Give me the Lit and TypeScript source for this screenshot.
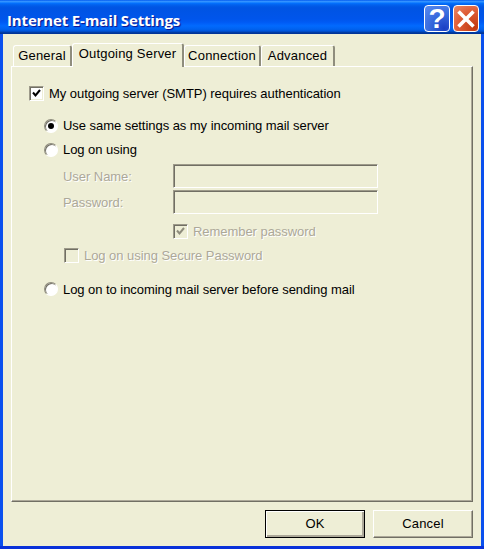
import { LitElement, html, css } from "lit";
import { customElement } from "lit/decorators.js";

@customElement("app-root")
export class AppRoot extends LitElement {
  static styles = css`
    :host { display: block; width: 484px; height: 549px; font-family: "Liberation Sans", Arial, sans-serif; font-size: 13px; letter-spacing: -0.05px; color: #000; }
    .window { width: 484px; height: 549px; box-sizing: border-box; display: flex; flex-direction: column; background: #0a50ee; border-bottom: 3px solid #0831d9; overflow: hidden; }
    .title { height: 34px; flex: none; box-sizing: border-box; display: flex; align-items: center; padding: 3px 5px 0 7px;
      background: linear-gradient(180deg, #0058ee 0%, #3593ff 4%, #288eff 6%, #127dff 8%, #036ffc 10%, #0262ee 14%, #0057e5 20%, #0054e3 24%, #0055eb 56%, #005bf5 66%, #026afe 76%, #0062ef 86%, #0052d6 92%, #0040ab 94%, #003092 100%); }
    .title-text { flex: 1; color: #fff; font-family: "Open Sans", sans-serif; font-weight: 700; font-size: 15px; letter-spacing: -0.15px; padding-top: 2px; text-shadow: 1px 1px 1px #0f1089; white-space: nowrap; }
    .tb { width: 26px; height: 27px; box-sizing: border-box; border: 1px solid #fff; border-radius: 4px; display: flex; align-items: center; justify-content: center; }
    .help { background: radial-gradient(circle at 80% 90%, #1a3fc4 0%, #3c6fe0 55%, #5a8cf0 100%); margin-right: 3px; color: #fff; font-family: "Liberation Sans", sans-serif; font-weight: 700; font-size: 28px; line-height: 25px; }
    .close { background: radial-gradient(circle at 85% 85%, #c23a10 0%, #e0603a 60%, #e88a6a 100%); }
    .body { flex: 1; margin: 0 3px; background: #eeeed6; display: flex; flex-direction: column; padding: 9px 8px 8px; min-height: 0; }
    .tabs { display: flex; align-items: flex-end; padding-left: 2px; height: 23px; flex: none; letter-spacing: 0.2px; }
    .tab { height: 21px; box-sizing: border-box; border: 1px solid #fff; border-bottom: 0; border-right: 2px solid #8f8d7d; border-radius: 3px 3px 0 0; display: flex; align-items: center; justify-content: center; white-space: nowrap; padding-bottom: 2px; }
    .tab.sel { height: 24px; margin-bottom: -1px; position: relative; z-index: 1; background: #eeeed6; padding-bottom: 5px; }
    .panel { flex: 1; box-sizing: border-box; border: 1px solid; border-color: #fff #716f64 #716f64 #fff; box-shadow: inset -1px -1px 0 #aca899; padding: 18px 0 0 17px; }
    .row { display: flex; align-items: center; height: 16px; white-space: nowrap; }
    .cb { width: 15px; height: 15px; box-sizing: border-box; flex: none; display: flex; align-items: center; justify-content: center;
      border: 1px solid; border-color: #9d9a8a #fff #fff #9d9a8a; background: #fff; box-shadow: inset 1px 1px 0 #716f64, inset -1px -1px 0 #eeeed6; }
    .cb svg { display: block; }
    .cb.off { background: #eeeed6; }
    .radio { width: 14px; height: 14px; box-sizing: border-box; flex: none; border-radius: 50%; background: #fff; border: 1px solid; border-color: #8f8d7d #fff #fff #8f8d7d; box-shadow: inset 1px 1px 0 #716f64; display: flex; align-items: center; justify-content: center; }
    .dot { width: 6px; height: 6px; border-radius: 50%; background: #000; }
    .lbl-cb { margin-left: 5px; }
    .lbl-r { margin-left: 5px; }
    .up { padding-bottom: 2px; }
    .dis { color: #aca899; text-shadow: 1px 1px 0 #fff; }
    .group { margin-left: 15px; }
    .m17 { margin-top: 17px; }
    .m8 { margin-top: 8px; }
    .m18 { margin-top: 18px; }
    .form { margin: 6px 0 0 19px; display: grid; grid-template-columns: 110px 205px; grid-auto-rows: 24px; row-gap: 2px; align-items: center; }
    .input { height: 24px; box-sizing: border-box; border: 1px solid; border-color: #9d9a8a #fff #fff #9d9a8a; box-shadow: inset 1px 1px 0 #716f64; }
    .rem { margin: 9px 0 0 129px; }
    .sec { margin: 8px 0 0 20px; }
    .footer { flex: none; display: flex; justify-content: flex-end; gap: 8px; padding-top: 8px; letter-spacing: 0.2px; }
    .btn { width: 100px; height: 28px; box-sizing: border-box; border: 1px solid; border-color: #fff #716f64 #716f64 #fff; box-shadow: inset -1px -1px 0 #aca899; display: flex; align-items: center; justify-content: center; padding-bottom: 2px; }
    .btn.def { border: 1px solid #000; box-shadow: inset 1px 1px 0 #fff, inset -2px -2px 0 #aca899; }
  `;

  private check(color: string) {
    return html`<svg width="9" height="9" viewBox="0 0 9 9"><path d="M1 3.5 L3.5 6.5 L8 1" fill="none" stroke=${color} stroke-width="2"/></svg>`;
  }

  render() {
    return html`<div class="window">
      <div class="title">
        <div class="title-text">Internet E-mail Settings</div>
        <div class="tb help">?</div>
        <div class="tb close"><svg width="20" height="20" viewBox="0 0 20 20"><path d="M2.5 2.5 L17.5 17.5 M17.5 2.5 L2.5 17.5" stroke="#fff" stroke-width="3.6" fill="none"/></svg></div>
      </div>
      <div class="body">
        <div class="tabs">
          <div class="tab" style="width:59px">General</div>
          <div class="tab sel" style="width:112px">Outgoing Server</div>
          <div class="tab" style="width:77px">Connection</div>
          <div class="tab" style="width:74px">Advanced</div>
        </div>
        <div class="panel">
          <div class="row"><span class="cb">${this.check("#000")}</span><span class="lbl-cb">My outgoing server (SMTP) requires authentication</span></div>
          <div class="group">
            <div class="row m17"><span class="radio"><span class="dot"></span></span><span class="lbl-r up">Use same settings as my incoming mail server</span></div>
            <div class="row m8"><span class="radio"></span><span class="lbl-r up">Log on using</span></div>
            <div class="form">
              <span class="dis">User Name:</span><div class="input"></div>
              <span class="dis">Password:</span><div class="input"></div>
            </div>
            <div class="row rem"><span class="cb off">${this.check("#8f8d7d")}</span><span class="lbl-cb dis">Remember password</span></div>
            <div class="row sec"><span class="cb off"></span><span class="lbl-cb dis">Log on using Secure Password</span></div>
            <div class="row m18"><span class="radio"></span><span class="lbl-r">Log on to incoming mail server before sending mail</span></div>
          </div>
        </div>
        <div class="footer">
          <div class="btn def">OK</div>
          <div class="btn">Cancel</div>
        </div>
      </div>
    </div>`;
  }
}
